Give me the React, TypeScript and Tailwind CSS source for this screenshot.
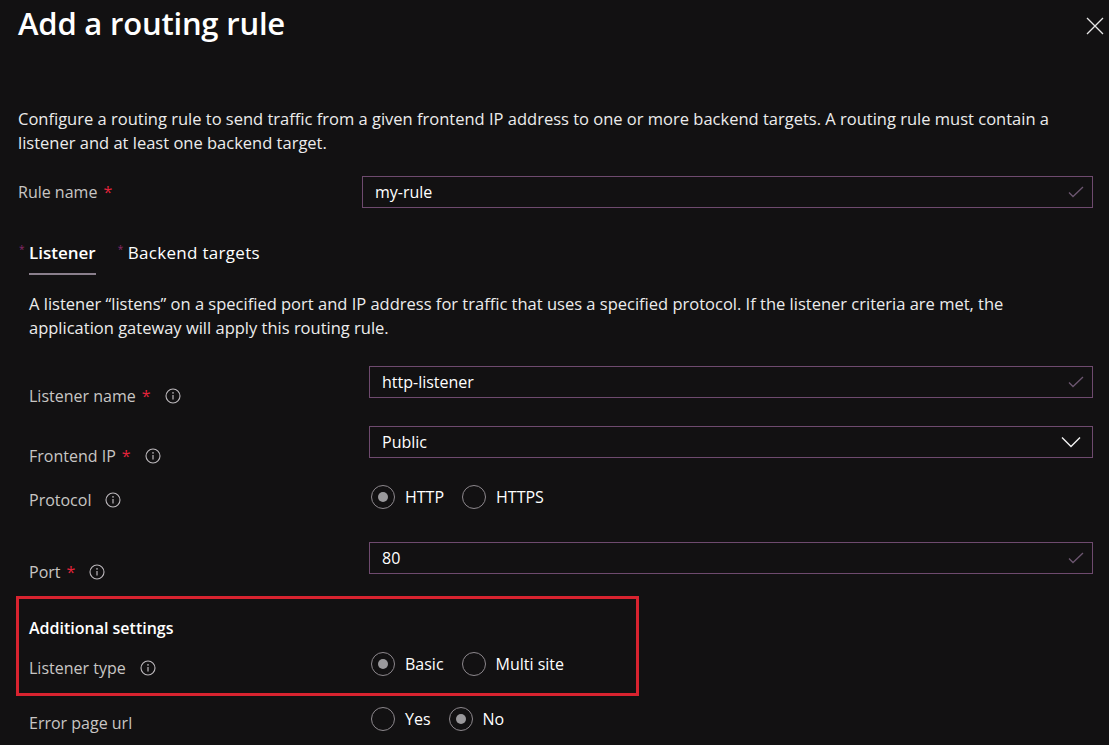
import { ReactNode } from "react";

const Req = () => <span className="text-[#e3243b] ml-[6px]">*</span>;

const Info = () => (
  <svg width="16" height="16" viewBox="0 0 16 16" className="ml-[14px] inline-block">
    <circle cx="8" cy="8" r="7" fill="none" stroke="#bdb9bd" strokeWidth="1.1" />
    <circle cx="8" cy="4.9" r="0.8" fill="#bdb9bd" />
    <path d="M8 7v4.6" stroke="#bdb9bd" strokeWidth="1.2" />
  </svg>
);

const Check = () => (
  <svg width="16" height="12" viewBox="0 0 16 12" className="absolute right-[8px] top-1/2 -translate-y-1/2">
    <path d="M1 6.5l4 4L15 1" fill="none" stroke="#6c5670" strokeWidth="1.3" />
  </svg>
);

const Chevron = () => (
  <svg width="20" height="12" viewBox="0 0 20 12" className="absolute right-[11px] top-1/2 -translate-y-1/2">
    <path d="M1 1.5l9 9 9-9" fill="none" stroke="#f2f2f2" strokeWidth="1.4" />
  </svg>
);

const TextBox = ({ value, dropdown }: { value: string; dropdown?: boolean }) => (
  <div className="relative h-[32px] border border-[#6e4a6e] flex items-center pl-[12px] text-[16px] text-white">
    {value}
    {dropdown ? <Chevron /> : <Check />}
  </div>
);

const Radio = ({ label, checked }: { label: string; checked?: boolean }) => (
  <div className="flex items-center mr-[18px]">
    <div className="w-[24px] h-[24px] rounded-full border border-[#8d888d] flex items-center justify-center">
      {checked && <div className="w-[10px] h-[10px] rounded-full bg-[#9a999c]" />}
    </div>
    <span className="ml-[10px] text-[16px] leading-[24px] text-white">{label}</span>
  </div>
);

const Row = ({
  label,
  children,
  labelPt,
  className,
}: {
  label: ReactNode;
  children: ReactNode;
  labelPt: string;
  className?: string;
}) => (
  <div className={"flex items-start " + (className ?? "")}>
    <div className={"w-[340px] flex items-center text-[16px] leading-[24px] text-[#c8c6c4] " + labelPt}>{label}</div>
    <div className="flex-1">{children}</div>
  </div>
);

export default function App() {
  return (
    <div
      className="min-h-screen w-full bg-[#121112] text-white pl-[18px] pr-[16px] overflow-hidden"
      style={{ fontFamily: '"Open Sans", "Noto Sans", sans-serif' }}
    >
      <div className="flex justify-between items-start pt-[1px]">
        <h1 className="text-[31px] font-semibold leading-[44px] tracking-[-0.2px]">Add a routing rule</h1>
        <svg width="18" height="18" viewBox="0 0 18 18" className="mt-[16px] -mr-[11px]">
          <path d="M1 1l16 16M17 1L1 17" stroke="#e6e6e6" strokeWidth="1.3" />
        </svg>
      </div>

      <p className="mt-[62px] text-[16.5px] leading-[24px] text-[#ececec] pr-[14px]">
        Configure a routing rule to send traffic from a given frontend IP address to one or more backend targets. A
        routing rule must contain a listener and at least one backend target.
      </p>

      <div className="flex items-center mt-[21px]">
        <div className="w-[344px] text-[16px] text-[#c8c6c4]">
          Rule name
          <Req />
        </div>
        <div className="flex-1">
          <TextBox value="my-rule" />
        </div>
      </div>

      <div className="pl-[11px]">
        <div className="flex items-end mt-[33px] text-[17px] leading-[24px]">
          <div className="relative border-b-2 border-[#8a7f8c] pb-[8px]">
            <span className="absolute -left-[10px] top-[-4px] text-[10px] text-[#8a2a6a]">*</span>
            <span className="font-semibold text-white">Listener</span>
          </div>
          <div className="relative ml-[32px] pb-[10px]">
            <span className="absolute -left-[10px] top-[-4px] text-[10px] text-[#8a2a6a]">*</span>
            <span className="text-white tracking-[0.3px]">Backend targets</span>
          </div>
        </div>

        <p className="mt-[17px] text-[16.5px] leading-[24px] text-[#ececec] pr-[20px]">
          A listener “listens” on a specified port and IP address for traffic that uses a specified protocol. If the
          listener criteria are met, the application gateway will apply this routing rule.
        </p>

        <Row
          className="mt-[26px]"
          labelPt="pt-[18px]"
          label={
            <>
              Listener name
              <Req />
              <Info />
            </>
          }
        >
          <TextBox value="http-listener" />
        </Row>

        <Row
          className="mt-[18px]"
          labelPt="pt-[18px]"
          label={
            <>
              Frontend IP
              <Req />
              <Info />
            </>
          }
        >
          <TextBox value="Public" dropdown />
        </Row>

        <Row
          className="mt-[17px]"
          labelPt="pt-[3px]"
          label={
            <>
              Protocol
              <Info />
            </>
          }
        >
          <div className="flex items-center pl-[2px]">
            <Radio label="HTTP" checked />
            <Radio label="HTTPS" />
          </div>
        </Row>

        <Row
          className="mt-[30px]"
          labelPt="pt-[18px]"
          label={
            <>
              Port
              <Req />
              <Info />
            </>
          }
        >
          <TextBox value="80" />
        </Row>

        <div className="mt-[12px] -ml-[13px] w-[623px] border-[3px] border-[#d8232f] pl-[10px] pt-[17px] pb-[13px]">
          <div className="text-[16px] leading-[24px] font-semibold text-white">Additional settings</div>
          <div className="flex items-start mt-[12px]">
            <div className="w-[340px] flex items-center text-[16px] leading-[24px] text-[#c8c6c4] pt-[4px]">
              Listener type
              <Info />
            </div>
            <div className="flex items-center pl-[2px]">
              <Radio label="Basic" checked />
              <Radio label="Multi site" />
            </div>
          </div>
        </div>

        <Row className="mt-[11px]" labelPt="pt-[4px]" label={<>Error page url</>}>
          <div className="flex items-center pl-[2px]">
            <Radio label="Yes" />
            <Radio label="No" checked />
          </div>
        </Row>
      </div>
    </div>
  );
}
